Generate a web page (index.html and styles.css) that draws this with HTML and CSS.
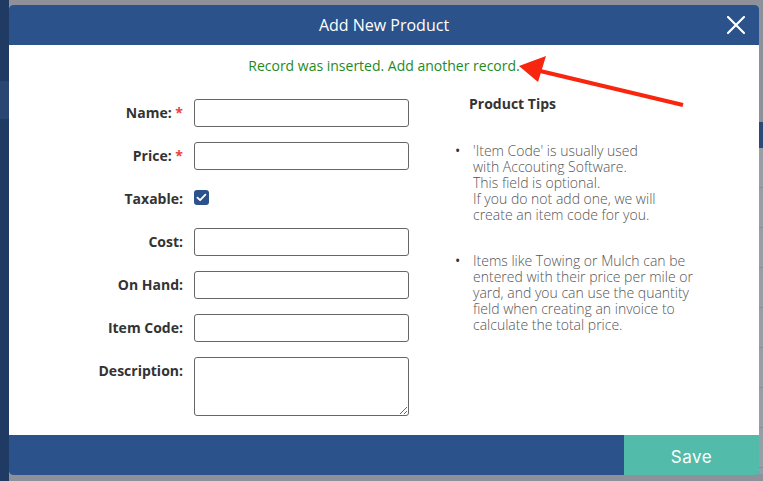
FILE: index.html
```html
<!DOCTYPE html>
<html>
<head>
<meta charset="utf-8">
<title>Add New Product</title>
<link rel="stylesheet" href="styles.css">
</head>
<body>
<div class="page">
  <aside class="sidebar"><div class="side-active"></div></aside>
  <main class="main">
    <div class="table">
      <div class="thead"></div>
      <div class="trow"></div>
      <div class="trow"></div>
      <div class="trow"></div>
      <div class="trow"></div>
      <div class="trow"></div>
      <div class="trow"></div>
      <div class="trow"></div>
      <div class="trow"></div>
    </div>
  </main>
</div>

<div class="modal">
  <header class="modal-header">
    <h1 class="modal-title">Add New Product</h1>
    <button class="close-btn" aria-label="Close">
      <svg width="20" height="20" viewBox="0 0 20 20"><path d="M2 2L18 18M18 2L2 18" stroke="#fff" stroke-width="2.2" stroke-linecap="round"/></svg>
    </button>
  </header>
  <div class="modal-body">
    <p class="success">Record was inserted. Add another record.</p>
    <div class="columns">
      <form class="form">
        <label class="lbl">Name: <span class="req">*</span></label>
        <input class="field" type="text">
        <label class="lbl">Price: <span class="req">*</span></label>
        <input class="field" type="text">
        <label class="lbl">Taxable:</label>
        <div class="check-cell">
          <span class="checkbox"><svg width="15" height="15" viewBox="0 0 15 15"><path d="M3.4 7.6L6.1 10.2L11.4 4.7" fill="none" stroke="#fff" stroke-width="1.8" stroke-linecap="round" stroke-linejoin="round"/></svg></span>
        </div>
        <label class="lbl">Cost:</label>
        <input class="field" type="text">
        <label class="lbl">On Hand:</label>
        <input class="field" type="text">
        <label class="lbl">Item Code:</label>
        <input class="field" type="text">
        <label class="lbl">Description:</label>
        <textarea class="field area"></textarea>
      </form>
      <section class="tips">
        <h2 class="tips-title">Product Tips</h2>
        <ul class="tips-list">
          <li><span>'Item Code' is usually used<br>with Accouting Software.<br>This field is optional.<br>If you do not add one, we will<br>create an item code for you.</span></li>
          <li><span>Items like Towing or Mulch can be<br>entered with their price per mile or<br>yard, and you can use the quantity<br>field when creating an invoice to<br>calculate the total price.</span></li>
        </ul>
      </section>
    </div>
  </div>
  <footer class="modal-footer">
    <button class="save-btn">Save</button>
  </footer>
</div>

<svg class="arrow" width="763" height="481" viewBox="0 0 763 481">
  <line x1="683" y1="105" x2="536" y2="70" stroke="#f8260e" stroke-width="4"/>
  <polygon points="519,66 546,56 538,82" fill="#f8260e"/>
</svg>
</body>
</html>
```
FILE: styles.css
```css
* { box-sizing: border-box; }
html, body { margin: 0; padding: 0; }
body {
  width: 763px;
  height: 481px;
  overflow: hidden;
  background: #8e919a;
  font-family: "Open Sans", "Noto Sans", sans-serif;
}
.page {
  display: flex;
  height: 481px;
}
.sidebar {
  width: 9px;
  background: #1f3a63;
  padding-top: 81px;
}
.side-active {
  height: 38px;
  background: #2a4774;
}
.main {
  flex: 1;
  display: flex;
  justify-content: flex-end;
  padding-top: 122px;
}
.table {
  width: 300px;
  background: #9a9da5;
  height: 352px;
}
.thead {
  height: 26px;
  background: #2c4a78;
}
.trow {
  height: 40px;
  border-bottom: 1px solid #8a8d96;
}

.modal {
  position: absolute;
  left: 9px;
  top: 5px;
  width: 750px;
  height: 470px;
  background: #fff;
  border-radius: 4px;
  overflow: hidden;
  display: flex;
  flex-direction: column;
}
.modal-header {
  height: 40px;
  background: #2b528a;
  display: flex;
  align-items: center;
  justify-content: center;
  position: relative;
}
.modal-title {
  margin: 0;
  font-size: 16px;
  font-weight: 400;
  color: #fff;
}
.close-btn {
  position: absolute;
  right: 13px;
  top: 10px;
  background: none;
  border: 0;
  padding: 0;
  width: 20px;
  height: 20px;
  display: flex;
}
.modal-body {
  flex: 1;
  padding-top: 10px;
}
.success {
  margin: 0;
  text-align: center;
  color: #1f8a1f;
  font-size: 14px;
  line-height: 22px;
}
.columns {
  display: flex;
  padding-top: 22px;
}
.form {
  display: grid;
  grid-template-columns: 174px 215px;
  column-gap: 11px;
  row-gap: 15px;
  align-items: start;
  width: 446px;
}
.lbl {
  text-align: right;
  font-size: 14px;
  font-weight: 700;
  color: #333;
  line-height: 28px;
}
.req { color: #e8423f; }
.field {
  width: 215px;
  height: 28px;
  border: 1px solid #666;
  border-radius: 3px;
  margin: 0;
  padding: 2px 6px;
  font-family: inherit;
}
.area {
  height: 59px;
  resize: vertical;
  display: block;
}
.check-cell {
  height: 28px;
  padding-top: 5px;
}
.checkbox {
  display: block;
  width: 15px;
  height: 15px;
  background: #2b528a;
  border-radius: 3px;
}
.checkbox svg { display: block; }
.tips {
  width: 260px;
}
.tips-title {
  margin: -6px 0 0 14px;
  font-size: 14px;
  font-weight: 700;
  color: #333;
  line-height: 22px;
}
.tips-list {
  list-style: none;
  margin: 28px 0 0;
  padding: 0;
  width: 260px;
}
.tips-list li {
  display: flex;
  font-size: 14px;
  font-weight: 300;
  color: #555;
  line-height: 16px;
  margin-bottom: 30px;
}
.tips-list li::before {
  content: "\2022";
  flex: none;
  width: 18px;
  font-weight: 400;
  color: #333;
}
.modal-footer {
  height: 40px;
  background: #2b528a;
  display: flex;
  justify-content: flex-end;
}
.save-btn {
  width: 135px;
  height: 40px;
  border: 0;
  background: #52bbaa;
  color: #fff;
  font-family: "Inter", "Open Sans", sans-serif;
  font-size: 17px;
  letter-spacing: 0.5px;
  padding: 4px 0 0;
}
.arrow {
  position: absolute;
  left: 0;
  top: 0;
  pointer-events: none;
}
```
